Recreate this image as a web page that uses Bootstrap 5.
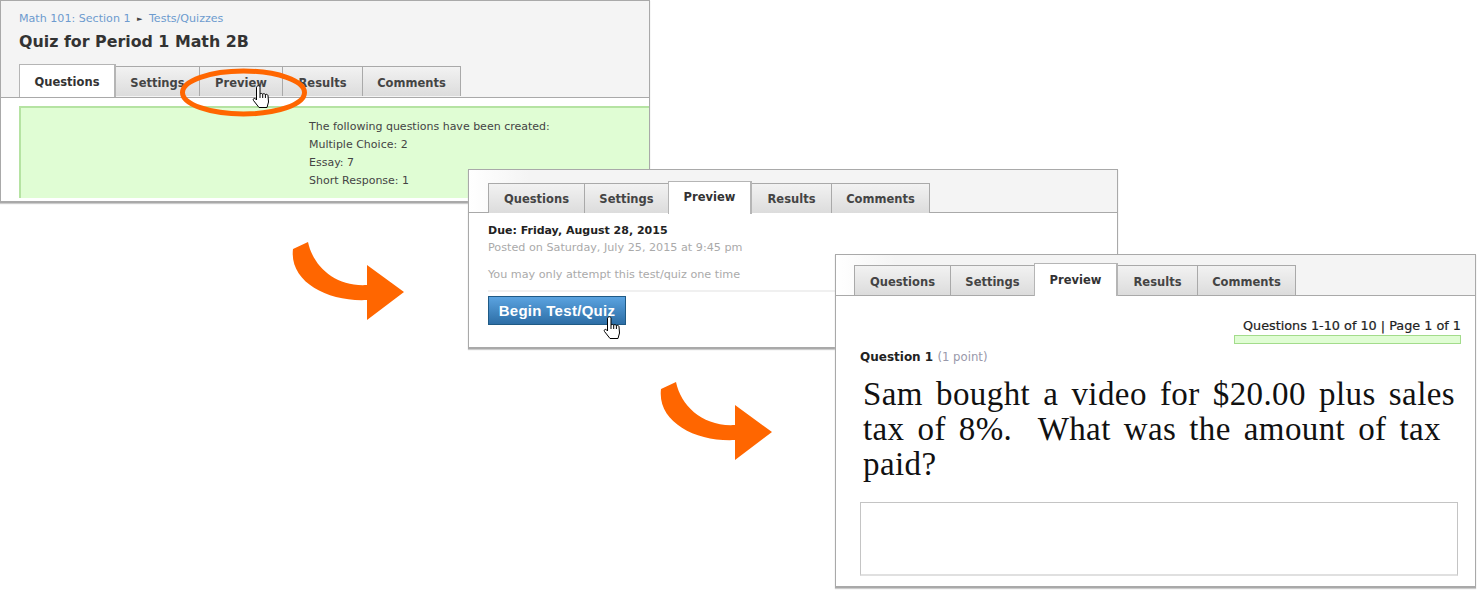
<!DOCTYPE html>
<html lang="en">
<head>
    <meta charset="UTF-8">
    <meta name="viewport" content="width=device-width, initial-scale=1">
    <title>Preview a Quiz</title>
    <link href="https://cdn.jsdelivr.net/npm/bootstrap@5.3.0/dist/css/bootstrap.min.css" rel="stylesheet">
    <style>
        body { background: #fff; overflow: hidden; font-family: "DejaVu Sans", sans-serif; font-size: 11px; color: #444; }
        .stage { position: relative; width: 1484px; height: 597px; }
        .shot { position: absolute; background: #fff; border: 1px solid #a9a9a9; border-bottom-width: 2px; box-shadow: 0 1px 1px #ccc; overflow: hidden; }
        #shot1 { left: 0; top: 0; width: 650px; height: 203px; }
        #shot2 { left: 468px; top: 169px; width: 650px; height: 180px; }
        #shot3 { left: 835px; top: 254px; width: 641px; height: 334px; }
        .shot-head { background: #f4f4f4; padding: 0 0 0 19px; border-bottom: 1px solid #a9a9a9; }
        #shot1 .shot-head { height: 97px; padding-top: 11px; }
        #shot2 .shot-head { height: 43px; padding-top: 13px; padding-left: 20px; background: linear-gradient(90deg, #fff, #f4f4f4 60px); }
        #shot3 .shot-head { height: 41px; padding-top: 10px; background: linear-gradient(90deg, #fff, #f4f4f4 60px); }
        .crumbs { color: #6d9bcf; line-height: 14px; font-size: 11.1px; margin-left: -1px; }
        .crumbs i { font-style: normal; color: #444; font-size: 7px; margin: 0 6.5px; vertical-align: 1px; }
        .quiz-name { font-size: 15.85px; font-weight: 700; color: #333; line-height: 20px; margin: 6px 0 14px -1px; }
        .nav-tabs.quiz-tabs { border: 0; flex-wrap: nowrap; }
        .quiz-tabs .nav-link { height: 30px; margin: 0 0 0 -1px; padding: 0; border: 1px solid #a9a9a9; border-bottom: 0; border-radius: 0; background: linear-gradient(#f2f2f2, #dcdcdc); color: #444; font-weight: 700; font-size: 11.5px; line-height: 32px; text-align: center; }
        .quiz-tabs .nav-link.active { height: 33px; margin-top: -2px; background: #fff; color: #333; line-height: 33px; position: relative; z-index: 1; border-color: #b5b5b5; border-width: 1px 2px 0 1px; }
        #shot1 .quiz-tabs .nav-link { line-height: 33px; }
        #shot1 .quiz-tabs .nav-link.active { line-height: 34px; }
        #shot2 .quiz-tabs .nav-link { line-height: 30px; }
        #shot2 .quiz-tabs .nav-link.active { line-height: 31px; }
        .tab-q { width: 97px; }
        .tab-s { width: 85px; }
        .tab-p { width: 84px; }
        .tab-r { width: 81px; }
        .tab-c { width: 99px; }
        .created-box { background: #e0fdd4; border-left: 2px solid #b5e3a2; border-top: 2px solid #b5e3a2; margin: 8px 0 0 18px; height: 92px; padding: 10px 0 0 288px; line-height: 18px; font-size: 11px; }
        .preview-body { padding: 9px 0 0 19px; width: 640px; }
        .due-line { color: #222; font-weight: 700; line-height: 17px; }
        .faint { color: #aaa; line-height: 17px; font-size: 11.2px; }
        .attempt-note { padding-bottom: 7px; margin-top: 10px; border-bottom: 2px solid #f0f0f0; }
        .begin-btn { background: linear-gradient(#5ba3e0, #2d6ea6); border: 1px solid #1f5a85; border-radius: 0; color: #fff; font-family: "Liberation Sans", sans-serif; font-weight: 700; font-size: 15px; letter-spacing: .3px; line-height: 27px; padding: 0; width: 138px; height: 29px; margin-top: 4px; }
        .question-body { padding: 23px 0 0 24px; }
        .page-info { width: 601px; }
        .page-count { color: #222; font-size: 12.8px; line-height: 14px; -webkit-text-stroke: .2px #222; }
        .page-bar { width: 227px; height: 9px; background: #e0fdd4; border: 1px solid #a3dc8b; margin-top: 2px; }
        .q-label { color: #222; font-size: 12px; font-weight: 700; line-height: 16px; margin-top: 5px; }
        .q-label span { color: #99a; font-weight: 400; font-size: 11.7px; }
        .q-text { font-family: "Liberation Serif", serif; font-size: 33px; letter-spacing: .4px; line-height: 35px; color: #111; margin: 12px 0 0 3px; }
        .q-line { display: block; text-align: justify; text-align-last: justify; white-space: nowrap; }
        .q-line1 { width: 592px; }
        .q-line2 { width: 578px; }
        .q-line3 { width: 72px; }
        .answer-box { width: 598px; height: 74px; border: 1px solid #c4c4c4; border-bottom: 2px solid #e0e0e0; margin-top: 20px; }
        .overlay { position: absolute; left: 0; top: 0; pointer-events: none; }
    </style>
</head>
<body>

<div class="stage">

    <!-- first screenshot: quiz created -->
    <div class="shot" id="shot1">
        <div class="shot-head">
            <div class="crumbs">Math 101: Section 1<i>&#9658;</i>Tests/Quizzes</div>
            <h1 class="quiz-name">Quiz for Period 1 Math 2B</h1>
            <ul class="nav nav-tabs quiz-tabs">
                <li class="nav-item"><a class="nav-link active tab-q" href="#">Questions</a></li>
                <li class="nav-item"><a class="nav-link tab-s" href="#">Settings</a></li>
                <li class="nav-item"><a class="nav-link tab-p" href="#">Preview</a></li>
                <li class="nav-item"><a class="nav-link tab-r" href="#">Results</a></li>
                <li class="nav-item"><a class="nav-link tab-c" href="#">Comments</a></li>
            </ul>
        </div>
        <div class="created-box">
            The following questions have been created:<br>
            Multiple Choice: 2<br>
            Essay: 7<br>
            Short Response: 1
        </div>
    </div>

    <!-- second screenshot: preview tab -->
    <div class="shot" id="shot2">
        <div class="shot-head">
            <ul class="nav nav-tabs quiz-tabs">
                <li class="nav-item"><a class="nav-link tab-q" href="#">Questions</a></li>
                <li class="nav-item"><a class="nav-link tab-s" href="#">Settings</a></li>
                <li class="nav-item"><a class="nav-link active tab-p" href="#">Preview</a></li>
                <li class="nav-item"><a class="nav-link tab-r" href="#">Results</a></li>
                <li class="nav-item"><a class="nav-link tab-c" href="#">Comments</a></li>
            </ul>
        </div>
        <div class="preview-body">
            <div class="due-line">Due: Friday, August 28, 2015</div>
            <div class="faint">Posted on Saturday, July 25, 2015 at 9:45 pm</div>
            <div class="faint attempt-note">You may only attempt this test/quiz one time</div>
            <button type="button" class="btn begin-btn d-block">Begin Test/Quiz</button>
        </div>
    </div>

    <!-- third screenshot: first question -->
    <div class="shot" id="shot3">
        <div class="shot-head">
            <ul class="nav nav-tabs quiz-tabs">
                <li class="nav-item"><a class="nav-link tab-q" href="#">Questions</a></li>
                <li class="nav-item"><a class="nav-link tab-s" href="#">Settings</a></li>
                <li class="nav-item"><a class="nav-link active tab-p" href="#">Preview</a></li>
                <li class="nav-item"><a class="nav-link tab-r" href="#">Results</a></li>
                <li class="nav-item"><a class="nav-link tab-c" href="#">Comments</a></li>
            </ul>
        </div>
        <div class="question-body">
            <div class="page-info d-flex flex-column align-items-end">
                <div class="page-count">Questions 1-10 of 10 | Page 1 of 1</div>
                <div class="page-bar"></div>
            </div>
            <div class="q-label">Question 1 <span>(1 point)</span></div>
            <p class="q-text">
                <span class="q-line q-line1">Sam bought a video for $20.00 plus sales</span>
                <span class="q-line q-line2">tax of 8%.&nbsp; What was the amount of tax</span>
                <span class="q-line q-line3">paid?</span>
            </p>
            <div class="answer-box"></div>
        </div>
    </div>

    <!-- orange annotations and cursors -->
    <svg class="overlay" width="1484" height="597" viewBox="0 0 1484 597">
        <defs>
            <path id="flow-arrow" fill="#ff6600" d="M293 249 L308 242 C313 266 335 287 367 285 L367 265 L404 292 L367 320 L367 300 C328 302 289 282 293 249 Z"/>
            <path id="hand" fill="#fff" stroke="#000" stroke-width="1" stroke-linejoin="round" d="M5.5 1 C6.8 .3 8 1 8 2.2 V9 C8.8 8.2 10 8.2 10.7 9.2 C11.4 8.4 12.8 8.5 13.4 9.6 C14.2 9 15.6 9.3 16 10.6 L16.5 17 L15 22.5 H7 L1.5 15.5 C.6 14.2 2 12.8 3.3 13.6 L4.5 15 V2.2 C4.5 1.7 5 1.2 5.5 1 Z M8 9 V13 M10.7 9.2 V13 M13.4 9.6 V13"/>
        </defs>
        <ellipse cx="243.5" cy="92.5" rx="61" ry="21.5" fill="none" stroke="#ff6600" stroke-width="5"/>
        <use href="#hand" x="252" y="85"/>
        <use href="#hand" x="603" y="316"/>
        <use href="#flow-arrow"/>
        <use href="#flow-arrow" x="368" y="140"/>
    </svg>

</div>

<script src="https://cdn.jsdelivr.net/npm/bootstrap@5.3.0/dist/js/bootstrap.bundle.min.js"></script>
</body>
</html>
